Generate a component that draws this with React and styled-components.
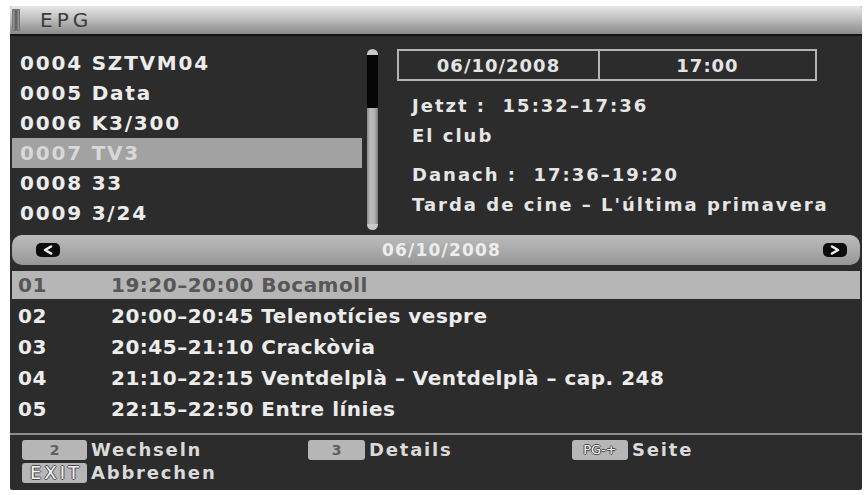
import React from "react";
import styled, { createGlobalStyle } from "styled-components";

const GlobalStyle = createGlobalStyle`
  body {
    margin: 0;
    background: #ffffff;
  }
`;

const Page = styled.div`
  width: 867px;
  height: 495px;
  padding: 6px 5px 5px 10px;
  box-sizing: border-box;
`;

const Screen = styled.div`
  height: 484px;
  display: flex;
  flex-direction: column;
  background: #2c2c2c;
  color: #e6e6e6;
  font-family: "DejaVu Sans", "Liberation Sans", sans-serif;
  font-weight: bold;
  border-radius: 2px;
  overflow: hidden;
`;

const TitleBar = styled.div`
  height: 28px;
  display: flex;
  align-items: center;
  gap: 20px;
  padding-left: 2px;
  background: linear-gradient(#e6e6e6, #c4c4c4 40%, #8a8a8a);
  border-bottom: 2px solid #141414;
`;

const TitleMark = styled.span`
  width: 6px;
  height: 20px;
  background: linear-gradient(90deg, #9a9a9a, #5c5c5c, #9a9a9a);
  border: 1px solid #777;
`;

const Title = styled.span`
  font-weight: normal;
  font-size: 20px;
  letter-spacing: 4px;
  color: #3c3c3c;
`;

const Upper = styled.div`
  height: 199px;
  display: flex;
  align-items: flex-start;
  padding-left: 2px;
  box-sizing: border-box;
`;

const ChannelList = styled.ul`
  list-style: none;
  margin: 12px 0 0;
  padding: 0;
  width: 350px;
`;

const ChannelRow = styled.li`
  height: 30px;
  line-height: 30px;
  padding-left: 8px;
  font-size: 20px;
  letter-spacing: 1.8px;
  white-space: pre;
  background: ${({ $active }) => ($active ? "#a2a2a2" : "transparent")};
  color: ${({ $active }) => ($active ? "#d8d8d8" : "#ececec")};
`;

const ScrollBar = styled.div`
  margin: 13px 0 0 5px;
  width: 11px;
  height: 181px;
  display: flex;
  flex-direction: column;
`;

const ScrollCap = styled.div`
  height: 6px;
  background: #c8c8c8;
  border-radius: ${({ $bottom }) => ($bottom ? "0 0 6px 6px" : "6px 6px 0 0")};
`;

const ScrollThumb = styled.div`
  height: 53px;
  background: #050505;
`;

const ScrollTrack = styled.div`
  flex: 1;
  background: linear-gradient(90deg, #8a8a8a, #bdbdbd 30%, #b0b0b0 70%, #7c7c7c);
`;

const InfoPanel = styled.div`
  margin: 13px 0 0 19px;
  width: 420px;
`;

const DateBox = styled.div`
  display: grid;
  grid-template-columns: 199px 1fr;
  height: 32px;
  border: 2px solid #b4b4b4;
  box-sizing: border-box;
`;

const DateCell = styled.div`
  display: flex;
  align-items: center;
  justify-content: center;
  font-size: 18px;
  letter-spacing: 1px;
  color: #e4e4e4;
  border-left: ${({ $split }) => ($split ? "2px solid #b4b4b4" : "none")};
`;

const InfoLine = styled.div`
  height: 30px;
  line-height: 30px;
  padding-left: 15px;
  margin-top: ${({ $gap }) => $gap || 0}px;
  font-size: 18px;
  letter-spacing: 2px;
  white-space: pre;
  color: #e6e6e6;
`;

const DateBar = styled.div`
  height: 30px;
  margin: 0 2px;
  display: grid;
  grid-template-columns: 1fr auto 1fr;
  align-items: center;
  padding: 0 13px 0 24px;
  border-radius: 10px;
  background: linear-gradient(#bcbcbc, #a6a6a6 60%, #969696);
`;

const DateBarText = styled.span`
  font-size: 17px;
  letter-spacing: 1.2px;
  color: #ededed;
`;

const ArrowKey = styled.svg`
  justify-self: ${({ $end }) => ($end ? "end" : "start")};
`;

const ProgramList = styled.ul`
  list-style: none;
  margin: 6px 0 0;
  padding: 0;
`;

const ProgramRow = styled.li`
  height: 28px;
  margin: 0 2px 3px;
  padding-left: 6px;
  display: flex;
  align-items: center;
  font-size: 20px;
  letter-spacing: 0.5px;
  white-space: pre;
  background: ${({ $active }) => ($active ? "#b6b6b6" : "transparent")};
  color: ${({ $active }) => ($active ? "#575757" : "#ececec")};
`;

const ProgramNo = styled.span`
  width: 93px;
`;

const Separator = styled.div`
  height: 2px;
  margin-top: 7px;
  background: #8c8c8c;
`;

const Footer = styled.div`
  display: grid;
  grid-template-columns: 286px 264px 1fr;
  row-gap: 2px;
  padding: 4px 0 0 12px;
`;

const Hint = styled.div`
  display: flex;
  align-items: center;
  gap: 4px;
  height: 21px;
`;

const Key = styled.span`
  width: ${({ $w }) => $w}px;
  height: 20px;
  display: flex;
  align-items: center;
  justify-content: center;
  border-radius: 3px;
  background: #b6b6b6;
  font-size: ${({ $size }) => $size || 14}px;
  font-weight: ${({ $light }) => ($light ? "normal" : "bold")};
  letter-spacing: ${({ $spacing }) => $spacing || 0}px;
  padding-left: ${({ $spacing }) => $spacing || 0}px;
  box-sizing: border-box;
  color: ${({ $light }) => ($light ? "#f6f6f6" : "#5e5e5e")};
  text-shadow: ${({ $light }) =>
    $light
      ? "1px 0 0 #4a4a4a, -1px 0 0 #4a4a4a, 0 1px 0 #4a4a4a, 0 -1px 0 #4a4a4a"
      : "none"};
`;

const HintLabel = styled.span`
  font-size: 18px;
  letter-spacing: 1.8px;
  color: #dadada;
`;

const channels = [
  "0004 SZTVM04",
  "0005 Data",
  "0006 K3/300",
  "0007 TV3",
  "0008 33",
  "0009 3/24",
];

const programs = [
  ["01", "19:20–20:00 Bocamoll"],
  ["02", "20:00–20:45 Telenotícies vespre"],
  ["03", "20:45–21:10 Crackòvia"],
  ["04", "21:10–22:15 Ventdelplà – Ventdelplà – cap. 248"],
  ["05", "22:15–22:50 Entre línies"],
];

function Arrow({ right }) {
  return (
    <ArrowKey $end={right} width="24" height="14" viewBox="0 0 24 14">
      <rect x="0" y="0" width="24" height="14" rx="5" fill="#0c0c0c" />
      <path
        d={right ? "M9 3.5 L15 7 L9 10.5" : "M15 3.5 L9 7 L15 10.5"}
        fill="none"
        stroke="#f2f2f2"
        strokeWidth="2.6"
        strokeLinejoin="round"
        strokeLinecap="round"
      />
    </ArrowKey>
  );
}

export default function App() {
  return (
    <Page>
      <GlobalStyle />
      <Screen>
        <TitleBar>
          <TitleMark />
          <Title>EPG</Title>
        </TitleBar>

        <Upper>
          <ChannelList>
            {channels.map((c, i) => (
              <ChannelRow key={c} $active={i === 3}>
                {c}
              </ChannelRow>
            ))}
          </ChannelList>
          <ScrollBar>
            <ScrollCap />
            <ScrollThumb />
            <ScrollTrack />
            <ScrollCap $bottom />
          </ScrollBar>
          <InfoPanel>
            <DateBox>
              <DateCell>06/10/2008</DateCell>
              <DateCell $split>17:00</DateCell>
            </DateBox>
            <InfoLine $gap={10}>{"Jetzt :  15:32–17:36"}</InfoLine>
            <InfoLine>El club</InfoLine>
            <InfoLine $gap={9}>{"Danach :  17:36–19:20"}</InfoLine>
            <InfoLine>Tarda de cine – L'última primavera</InfoLine>
          </InfoPanel>
        </Upper>

        <DateBar>
          <Arrow />
          <DateBarText>06/10/2008</DateBarText>
          <Arrow right />
        </DateBar>

        <ProgramList>
          {programs.map(([no, text], i) => (
            <ProgramRow key={no} $active={i === 0}>
              <ProgramNo>{no}</ProgramNo>
              {text}
            </ProgramRow>
          ))}
        </ProgramList>

        <Separator />

        <Footer>
          <Hint>
            <Key $w={65}>2</Key>
            <HintLabel>Wechseln</HintLabel>
          </Hint>
          <Hint>
            <Key $w={57}>3</Key>
            <HintLabel>Details</HintLabel>
          </Hint>
          <Hint>
            <Key $w={56} $light $size={13}>
              PG-+
            </Key>
            <HintLabel>Seite</HintLabel>
          </Hint>
          <Hint>
            <Key $w={65} $light $size={18} $spacing={3}>
              EXIT
            </Key>
            <HintLabel>Abbrechen</HintLabel>
          </Hint>
        </Footer>
      </Screen>
    </Page>
  );
}
